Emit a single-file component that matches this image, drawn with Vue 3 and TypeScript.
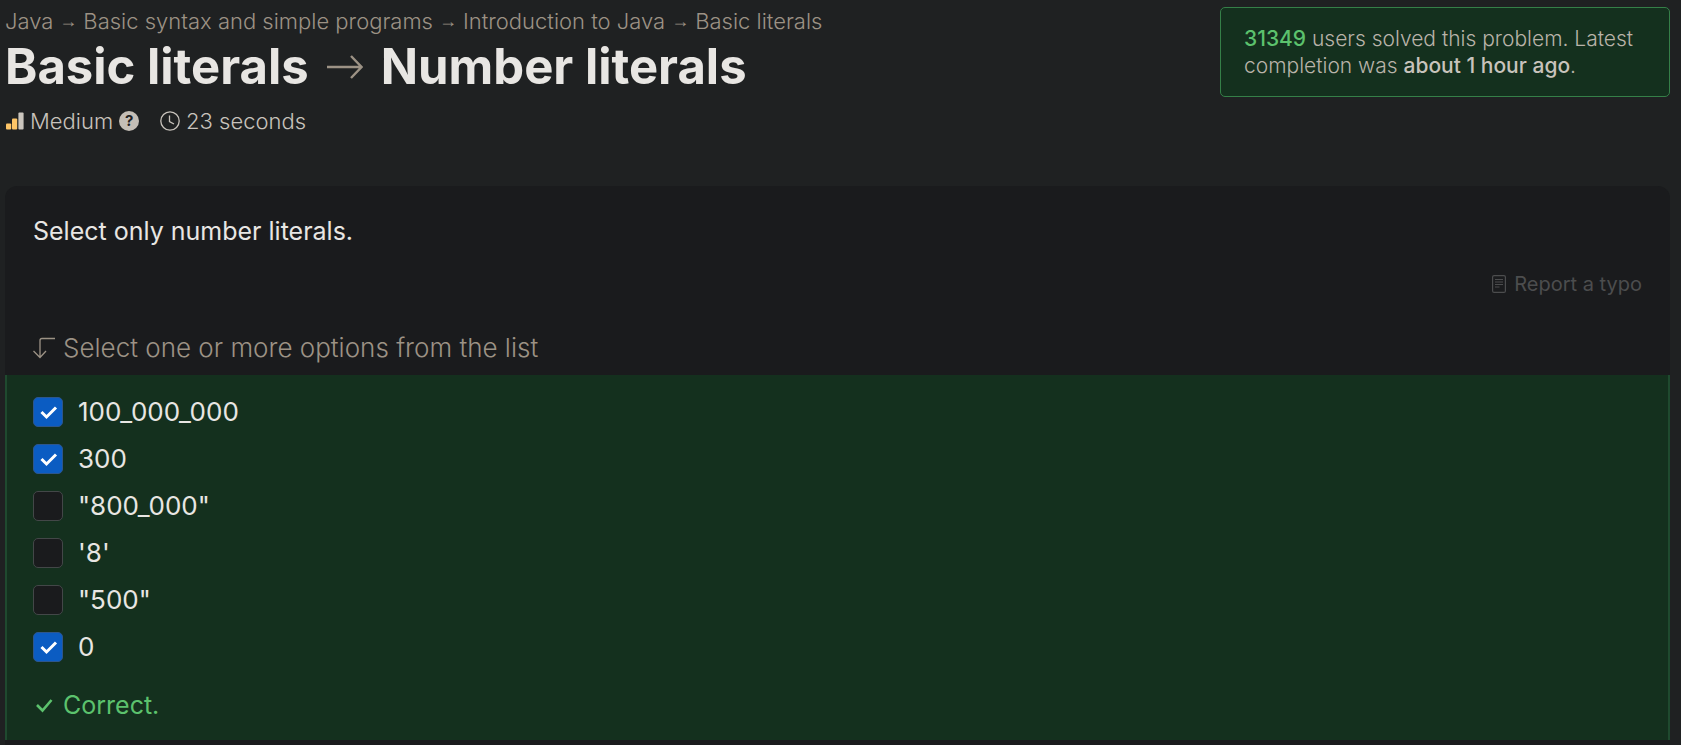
<script setup lang="ts">
import { ref } from 'vue'

interface Option {
  label: string
  checked: boolean
}

const crumbs: string[] = ['Java', 'Basic syntax and simple programs', 'Introduction to Java', 'Basic literals']

const options = ref<Option[]>([
  { label: '100_000_000', checked: true },
  { label: '300', checked: true },
  { label: '"800_000"', checked: false },
  { label: "'8'", checked: false },
  { label: '"500"', checked: false },
  { label: '0', checked: true },
])
</script>

<template>
  <main class="page">
    <header class="top">
      <div class="heading">
        <nav class="crumbs" aria-label="Breadcrumb">
          <template v-for="(crumb, i) in crumbs" :key="crumb">
            <span v-if="i > 0" class="sep">→</span>
            <a href="#">{{ crumb }}</a>
          </template>
        </nav>
        <h1 class="title">
          <span>Basic literals</span>
          <svg class="title-arrow" width="36" height="24" viewBox="0 0 36 24" fill="none" aria-hidden="true">
            <path d="M0 12H34M24 1L34.500 12L24 23" stroke="#9c9285" stroke-width="2.400" />
          </svg>
          <span>Number literals</span>
        </h1>
        <div class="meta">
          <span class="level">
            <svg width="18" height="18" viewBox="0 0 18 18" aria-hidden="true">
              <rect x="0" y="11.500" width="5.200" height="6" rx="1" fill="#fdc567" />
              <rect x="6" y="6.500" width="5.200" height="11" rx="1" fill="#fdc567" />
              <rect x="12.400" y="0.500" width="5.200" height="17" rx="1" fill="#cbc6be" />
            </svg>
            <span>Medium</span>
            <button class="help" type="button" aria-label="About difficulty">?</button>
          </span>
          <span class="time">
            <svg width="20" height="20" viewBox="0 0 20 20" fill="none" stroke="#c8c3bc" stroke-width="1.300" aria-hidden="true">
              <circle cx="10" cy="10" r="9.200" />
              <path d="M9.500 4.500V10.500L14 13" />
            </svg>
            <span>23 seconds</span>
          </span>
        </div>
      </div>
      <aside class="stats">
        <strong class="count">31349</strong> users solved this problem. Latest completion was
        <strong>about 1 hour ago</strong>.
      </aside>
    </header>

    <section class="card">
      <p class="prompt">Select only number literals.</p>
      <div class="report-row">
        <button class="report" type="button">
          <svg width="14" height="18" viewBox="0 0 14 18" fill="none" stroke="#4c4d4e" aria-hidden="true">
            <rect x="0.600" y="0.600" width="12.800" height="16.800" rx="1.500" stroke-width="1.200" />
            <path d="M3 4.500H11M3 7H11M3 9.500H11M3 12H7.500" stroke-width="1.200" />
          </svg>
          <span>Report a typo</span>
        </button>
      </div>
      <h2 class="hint">
        <svg width="22" height="22" viewBox="0 0 22 22" fill="none" stroke="#9c9285" stroke-width="1.300" aria-hidden="true">
          <path d="M22 1.500H9Q7 1.500 7 3.500V20.500M0.500 14L7 20.500L13 14" />
        </svg>
        <span>Select one or more options from the list</span>
      </h2>

      <div class="answers">
        <ul class="options">
          <li v-for="option in options" :key="option.label">
            <label class="option">
              <span class="box">
                <input v-model="option.checked" type="checkbox" />
                <svg v-if="option.checked" width="30" height="30" viewBox="0 0 30 30" fill="none" aria-hidden="true">
                  <path d="M8.500 15L13.500 20L23 10.500" stroke="#fff" stroke-width="3" />
                </svg>
              </span>
              <span>{{ option.label }}</span>
            </label>
          </li>
        </ul>
        <p class="result">
          <svg width="22" height="22" viewBox="0 0 22 22" fill="none" aria-hidden="true">
            <path d="M4 11L9.500 16.500L18.500 6" stroke="#5cc26d" stroke-width="2.600" />
          </svg>
          <span>Correct.</span>
        </p>
      </div>
    </section>
  </main>
</template>

<style>
body {
  margin: 0;
  background: #1f2122;
}
</style>

<style scoped>
.page {
  box-sizing: border-box;
  min-height: 100vh;
  padding: 7px 11px 0 5px;
  background: #1f2122;
  color: #e8e6e3;
  font-family: Inter, "Open Sans", sans-serif;
  font-size: 25px;
  font-weight: 400;
}

.top {
  display: flex;
  justify-content: space-between;
  align-items: flex-start;
  gap: 24px;
  min-height: 179px;
}

.crumbs {
  display: flex;
  flex-wrap: wrap;
  align-items: center;
  font-size: 22px;
  font-weight: 300;
  line-height: 28px;
  color: #9c9285;
}

.crumbs a {
  color: inherit;
  text-decoration: none;
}

.sep {
  margin: 0 6px;
  font-family: "Liberation Sans", sans-serif;
  font-size: 18px;
}

.title {
  display: flex;
  align-items: center;
  gap: 18px;
  margin: 4px 0 0;
  font-size: 49px;
  font-weight: 700;
  line-height: 56px;
}

.meta {
  display: flex;
  gap: 21px;
  margin-top: 12px;
  padding-left: 1px;
  font-size: 22px;
  font-weight: 300;
  line-height: 28px;
  color: #c8c3bc;
}

.level,
.time {
  display: flex;
  align-items: center;
  gap: 6px;
}

.help {
  width: 20px;
  height: 20px;
  padding: 0;
  border: 0;
  border-radius: 50%;
  background: #c4beb6;
  color: #1f2122;
  font: 700 15px/20px Inter, sans-serif;
}

.stats {
  box-sizing: border-box;
  width: 450px;
  padding: 17px 23px;
  border: 1px solid #357f48;
  border-radius: 5px;
  background: #14301e;
  color: #b9b3a9;
  font-size: 21px;
  font-weight: 300;
  line-height: 27px;
}

.stats strong {
  font-weight: 500;
  color: #c8c3bc;
}

.stats .count {
  color: #5cc26d;
}

.card {
  padding-bottom: 5px;
  border-radius: 12px 12px 0 0;
  background: #1a1b1d;
}

.prompt {
  margin: 0;
  padding: 29px 28px 0;
  line-height: 32px;
}

.report-row {
  display: flex;
  justify-content: flex-end;
  padding: 22px 28px 0;
}

.report {
  display: flex;
  align-items: center;
  gap: 8px;
  padding: 0;
  border: 0;
  background: none;
  color: #4c4d4e;
  font: 400 20px/30px Inter, sans-serif;
}

.hint {
  display: flex;
  align-items: center;
  gap: 8px;
  margin: 0;
  padding: 33px 28px 11px;
  font-size: 26px;
  font-weight: 300;
  line-height: 32px;
  color: #9c9285;
}

.answers {
  padding: 22px 26px 19px;
  border: solid #1f4a2f;
  border-width: 0 2px;
  background: #14301e;
}

.options {
  display: grid;
  gap: 17px;
  margin: 0;
  padding: 0;
  list-style: none;
}

.option {
  display: flex;
  align-items: center;
  gap: 15px;
  font-size: 26px;
  line-height: 30px;
}

.box {
  display: grid;
}

.box > * {
  grid-area: 1 / 1;
}

.box svg {
  pointer-events: none;
}

.box input {
  appearance: none;
  box-sizing: border-box;
  width: 30px;
  height: 30px;
  margin: 0;
  border: 1px solid #434748;
  border-radius: 5px;
  background: #1a1b1d;
}

.box input:checked {
  border-color: #2d568c;
  background: #0b5cc2;
}

.result {
  display: flex;
  align-items: center;
  gap: 8px;
  margin: 27px 0 0;
  line-height: 32px;
  color: #5cc26d;
}
</style>
